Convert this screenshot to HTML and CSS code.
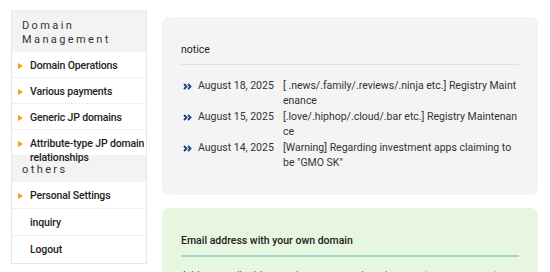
FILE: index.html
```html
<!DOCTYPE html>
<html lang="en">
<head>
<meta charset="utf-8">
<title>Domain Management</title>
<link rel="stylesheet" href="styles.css">
</head>
<body>
<div class="page">
  <nav class="sidebar">
    <div class="side-head">Domain Management</div>
    <ul class="menu">
      <li class="item arrow">Domain Operations</li>
      <li class="item arrow">Various payments</li>
      <li class="item arrow">Generic JP domains</li>
      <li class="item arrow">Attribute-type JP domain relationships</li>
    </ul>
    <div class="side-head short">others</div>
    <ul class="menu">
      <li class="item tall arrow">Personal Settings</li>
      <li class="item tall">inquiry</li>
      <li class="item tall last">Logout</li>
    </ul>
  </nav>
  <main class="main">
    <section class="panel notice">
      <h2 class="panel-title">notice</h2>
      <ul class="news">
        <li class="news-item"><svg class="chev" viewBox="0 0 9 7" width="9" height="7"><path d="M1 1l2.5 2.5L1 6M5 1l2.5 2.5L5 6"/></svg><span class="date">August 18, 2025</span><span class="subject">[ .news/.family/.reviews/.ninja etc.] Registry Maintenance</span></li>
        <li class="news-item"><svg class="chev" viewBox="0 0 9 7" width="9" height="7"><path d="M1 1l2.5 2.5L1 6M5 1l2.5 2.5L5 6"/></svg><span class="date">August 15, 2025</span><span class="subject">[.love/.hiphop/.cloud/.bar etc.] Registry Maintenance</span></li>
        <li class="news-item"><svg class="chev" viewBox="0 0 9 7" width="9" height="7"><path d="M1 1l2.5 2.5L1 6M5 1l2.5 2.5L5 6"/></svg><span class="date">August 14, 2025</span><span class="subject">[Warning] Regarding investment apps claiming to be "GMO SK"</span></li>
      </ul>
    </section>
    <section class="panel mail">
      <h2 class="panel-title strong">Email address with your own domain</h2>
      <p class="mail-text">Add an email address using your own domain name to your account.</p>
    </section>
  </main>
</div>
</body>
</html>
```
FILE: styles.css
```css
* { box-sizing: border-box; }
html, body { margin: 0; padding: 0; background: #fff; }
body {
  font-family: Roboto, "Liberation Sans", sans-serif;
  color: #333;
  font-size: 10.5px;
  overflow: hidden;
  height: 272px;
}
.page {
  display: flex;
  align-items: flex-start;
  gap: 15px;
  padding: 10px 12px 0 11px;
}
.sidebar {
  width: 136px;
  flex: none;
  border: 1px solid #e8e8e8;
  border-top: 0;
  border-bottom: 1px solid #e8e8e8;
  background: #fff;
}
.side-head {
  background: #f3f3f3;
  border-top: 1px solid #ececec;
  height: 42px;
  padding: 8px 10px 0;
  line-height: 14px;
  font-size: 11px;
  letter-spacing: 2.4px;
  color: #333;
}
.side-head.short {
  border-top: 0;
  height: 26px;
  padding: 7px 10px 0;
}
.menu { list-style: none; margin: 0; padding: 0; }
.item {
  position: relative;
  height: 26px;
  padding: 7px 0 0 18px;
  line-height: 14px;
  font-weight: 500;
  letter-spacing: -0.15px;
  color: #222;
  border-bottom: 1px dotted #e6e6e6;
}
.item.tall { height: 27px; padding-top: 7px; }
.item.last { border-bottom: 0; }
.item.arrow::before {
  content: "";
  position: absolute;
  left: 6px;
  top: 11px;
  border-left: 5px solid #f5a10a;
  border-top: 3.5px solid transparent;
  border-bottom: 3.5px solid transparent;
}
.main {
  flex: 1;
  display: flex;
  flex-direction: column;
  gap: 13px;
  padding-top: 7px;
}
.panel {
  border-radius: 7px;
  padding: 26px 19px 0;
}
.notice { background: #f4f4f4; height: 178px; }
.mail { background: #e7f6e0; height: 80px; }
.panel-title {
  margin: 0;
  font-size: 10.5px;
  font-weight: 400;
  line-height: 14px;
  padding-bottom: 7px;
  border-bottom: 1px solid #e0e0e0;
  color: #222;
}
.panel-title.strong {
  font-weight: 500;
  padding-bottom: 7px;
  border-bottom: 2px solid #9fd6c6;
}
.news { list-style: none; margin: 14px 0 0; padding: 0; }
.news-item {
  display: flex;
  line-height: 14.5px;
  margin-bottom: 2px;
  min-height: 29px;
}
.chev {
  flex: none;
  margin: 4px 6px 0 2px;
  fill: none;
  stroke: #1d3f82;
  stroke-width: 1.8;
}
.date { flex: none; width: 85px; }
.subject { flex: 1; word-break: break-all; }
.mail-text {
  margin: 12px 0 0;
  line-height: 14px;
  color: #555;
}
```
